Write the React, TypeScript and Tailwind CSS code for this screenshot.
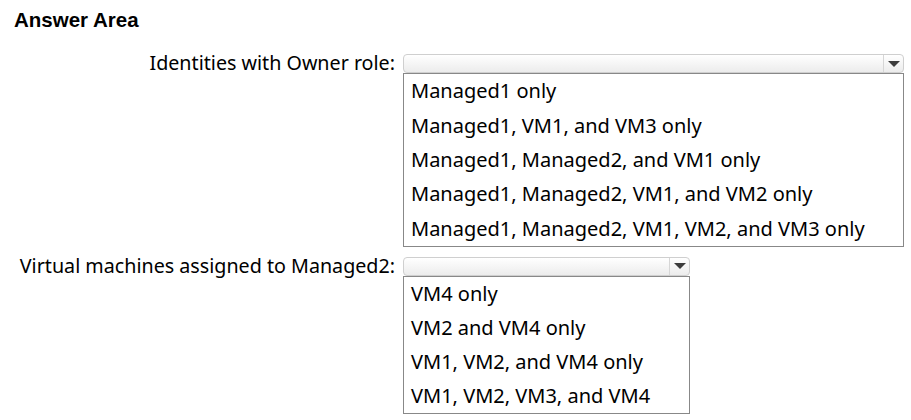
import React from 'react';

interface DropdownProps {
  width: string;
  itemHeight: string;
  options: string[];
}

const Dropdown: React.FC<DropdownProps> = ({ width, itemHeight, options }) => (
  <div className={`${width} flex flex-col`}>
    <div className="h-[19px] flex rounded-[4px] border border-[#cfcfcf] bg-gradient-to-b from-white to-[#ececec]">
      <div className="flex-1" />
      <div className="w-[20px] border-l border-[#d6d6d6] flex items-center justify-center">
        <div className="w-0 h-0 border-l-[6px] border-r-[6px] border-t-[6px] border-l-transparent border-r-transparent border-t-[#3c3c3c]" />
      </div>
    </div>
    <div className="border border-[#888888] bg-white">
      {options.map(opt => (
        <div key={opt} className={`${itemHeight} pl-[7px] flex items-center text-[20px] text-black whitespace-nowrap`}>
          {opt}
        </div>
      ))}
    </div>
  </div>
);

const App: React.FC = () => {
  return (
    <div className="w-[911px] h-[420px] bg-white font-['Segoe_UI','Noto_Sans',sans-serif] text-black">
      <div className="pl-[14px] pt-[8px] font-['Liberation_Sans',Arial,sans-serif] font-bold text-[20.5px] leading-[24px]">
        Answer Area
      </div>
      <div className="mt-[22px] flex">
        <div className="w-[395px] h-[19px] flex items-center justify-end text-[19.7px] whitespace-nowrap -translate-y-[1px]">
          Identities with Owner role:
        </div>
        <div className="ml-[8px]">
          <Dropdown
            width="w-[501px]"
            itemHeight="h-[34.4px]"
            options={[
              'Managed1 only',
              'Managed1, VM1, and VM3 only',
              'Managed1, Managed2, and VM1 only',
              'Managed1, Managed2, VM1, and VM2 only',
              'Managed1, Managed2, VM1, VM2, and VM3 only'
            ]}
          />
        </div>
      </div>
      <div className="mt-[10px] flex">
        <div className="w-[395px] h-[19px] flex items-center justify-end text-[19.7px] whitespace-nowrap -translate-y-[1px]">
          Virtual machines assigned to Managed2:
        </div>
        <div className="ml-[8px]">
          <Dropdown
            width="w-[287px]"
            itemHeight="h-[34px]"
            options={[
              'VM4 only',
              'VM2 and VM4 only',
              'VM1, VM2, and VM4 only',
              'VM1, VM2, VM3, and VM4'
            ]}
          />
        </div>
      </div>
    </div>
  );
};

export default App;
